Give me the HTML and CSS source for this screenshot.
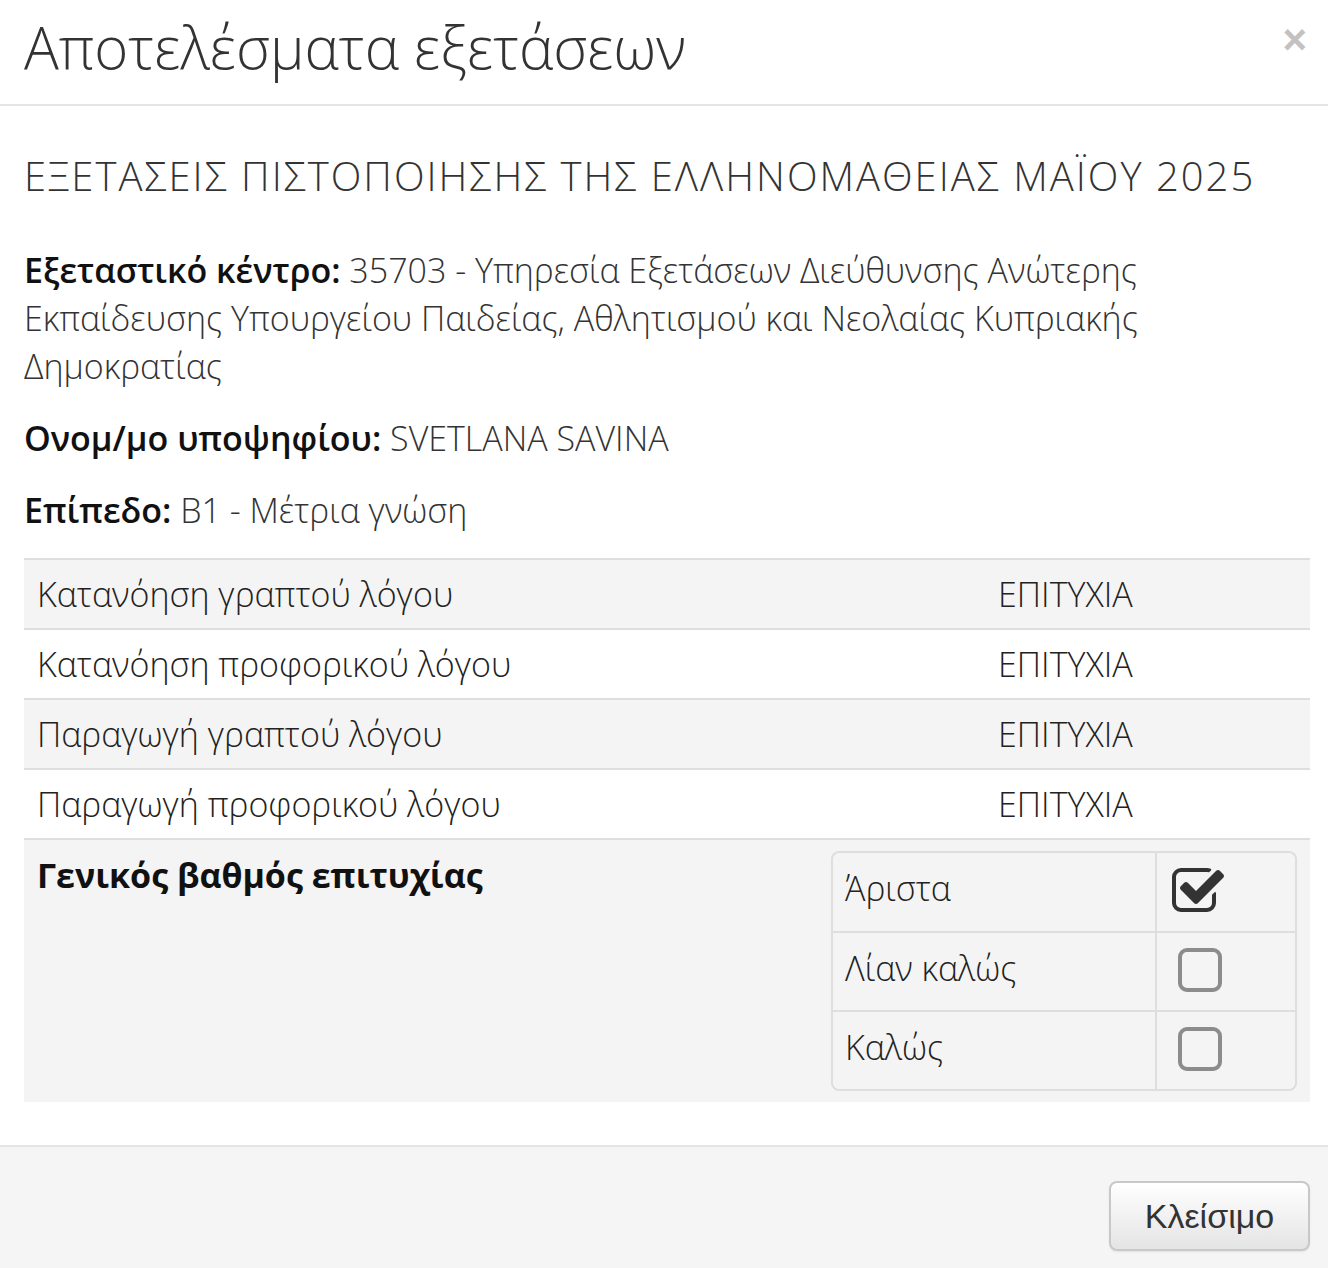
FILE: index.html
```html
<!DOCTYPE html>
<html lang="el">
<head>
<meta charset="utf-8">
<title>Αποτελέσματα εξετάσεων</title>
<link rel="stylesheet" href="styles.css">
</head>
<body>
<div class="modal">
  <header class="modal-header">
    <h1 class="modal-title">Αποτελέσματα εξετάσεων</h1>
    <button class="close" type="button" aria-label="Close">×</button>
  </header>
  <main class="modal-body">
    <h2 class="exam-title">ΕΞΕΤΑΣΕΙΣ ΠΙΣΤΟΠΟΙΗΣΗΣ ΤΗΣ ΕΛΛΗΝΟΜΑΘΕΙΑΣ ΜΑΪΟΥ 2025</h2>
    <p class="info"><strong>Εξεταστικό κέντρο:</strong> 35703 - Υπηρεσία Εξετάσεων Διεύθυνσης Ανώτερης Εκπαίδευσης Υπουργείου Παιδείας, Αθλητισμού και Νεολαίας Κυπριακής Δημοκρατίας</p>
    <p class="info"><strong>Ονομ/μο υποψηφίου:</strong> SVETLANA SAVINA</p>
    <p class="info"><strong>Επίπεδο:</strong> B1 - Μέτρια γνώση</p>
    <div class="results">
      <div class="row striped"><span>Κατανόηση γραπτού λόγου</span><span>ΕΠΙΤΥΧΙΑ</span></div>
      <div class="row"><span>Κατανόηση προφορικού λόγου</span><span>ΕΠΙΤΥΧΙΑ</span></div>
      <div class="row striped"><span>Παραγωγή γραπτού λόγου</span><span>ΕΠΙΤΥΧΙΑ</span></div>
      <div class="row"><span>Παραγωγή προφορικού λόγου</span><span>ΕΠΙΤΥΧΙΑ</span></div>
      <div class="grade-row striped">
        <strong class="grade-label">Γενικός βαθμός επιτυχίας</strong>
        <div class="grades">
          <div class="grade">
            <span class="grade-name">Άριστα</span>
            <span class="grade-box">
              <svg class="icon checked" viewBox="0 0 1792 1792" width="56" height="56"><path fill="currentColor" d="M1472 930v318q0 119-84.5 203.5t-203.5 84.5h-832q-119 0-203.5-84.5t-84.5-203.5v-832q0-119 84.5-203.5t203.5-84.5h832q63 0 117 25 15 7 18 23 3 17-9 29l-49 49q-10 10-23 10-3 0-9-2-23-6-45-6h-832q-66 0-113 47t-47 113v832q0 66 47 113t113 47h832q66 0 113-47t47-113v-254q0-13 9-22l64-64q10-10 23-10 6 0 12 3 20 8 20 29zm231-489l-814 814q-24 24-57 24t-57-24l-430-430q-24-24-24-57t24-57l110-110q24-24 57-24t57 24l263 263 647-647q24-24 57-24t57 24l110 110q24 24 24 57t-24 57z"/></svg>
            </span>
          </div>
          <div class="grade">
            <span class="grade-name">Λίαν καλώς</span>
            <span class="grade-box">
              <svg class="icon unchecked" viewBox="0 0 1408 1792" width="44" height="56"><path fill="currentColor" d="M1120 256h-832q-66 0-113 47t-47 113v832q0 66 47 113t113 47h832q66 0 113-47t47-113v-832q0-66-47-113t-113-47zm288 160v832q0 119-84.5 203.5t-203.5 84.5h-832q-119 0-203.5-84.5t-84.5-203.5v-832q0-119 84.5-203.5t203.5-84.5h832q119 0 203.5 84.5t84.5 203.5z"/></svg>
            </span>
          </div>
          <div class="grade">
            <span class="grade-name">Καλώς</span>
            <span class="grade-box">
              <svg class="icon unchecked" viewBox="0 0 1408 1792" width="44" height="56"><path fill="currentColor" d="M1120 256h-832q-66 0-113 47t-47 113v832q0 66 47 113t113 47h832q66 0 113-47t47-113v-832q0-66-47-113t-113-47zm288 160v832q0 119-84.5 203.5t-203.5 84.5h-832q-119 0-203.5-84.5t-84.5-203.5v-832q0-119 84.5-203.5t203.5-84.5h832q119 0 203.5 84.5t84.5 203.5z"/></svg>
            </span>
          </div>
        </div>
      </div>
    </div>
  </main>
  <footer class="modal-footer">
    <button class="btn" type="button">Κλείσιμο</button>
  </footer>
</div>
</body>
</html>
```

FILE: styles.css
```css
* { box-sizing: border-box; }
html, body { margin: 0; padding: 0; background: #fff; }
body {
  font-family: "Open Sans", "Noto Sans", sans-serif;
  font-weight: 300;
  color: #333;
  width: 1328px;
  height: 1268px;
  overflow: hidden;
}
.modal { display: flex; flex-direction: column; height: 1268px; }

.modal-header {
  height: 106px;
  border-bottom: 2px solid #e5e5e5;
  display: flex;
  justify-content: space-between;
  align-items: flex-start;
  padding: 0 18px 0 24px;
}
.modal-title {
  margin: 0;
  font-size: 58px;
  font-weight: 300;
  line-height: 94px;
  color: #333;
}
.close {
  border: 0;
  background: none;
  padding: 0;
  margin-top: 16px;
  margin-right: 3px;
  font-family: "Liberation Sans", Arial, sans-serif;
  font-weight: 700;
  font-size: 42px;
  line-height: 48px;
  color: #c2c2c2;
}

.modal-body {
  flex: 1;
  padding: 46px 18px 0 24px;
}
.exam-title {
  margin: 0 0 46px;
  font-size: 40px;
  font-weight: 300;
  letter-spacing: 2px;
  line-height: 48px;
  color: #333;
  white-space: nowrap;
}
.info {
  margin: 0 0 24px;
  font-size: 34px;
  line-height: 48px;
}
.info strong { font-weight: 600; color: #111; }

.results { font-size: 34px; line-height: 48px; }
.row {
  display: grid;
  grid-template-columns: 961px 1fr;
  border-top: 2px solid #dedede;
  padding: 10px 13px;
  color: #222;
}
.striped { background: #f4f4f4; }

.grade-row {
  display: flex;
  justify-content: space-between;
  align-items: flex-start;
  border-top: 2px solid #dedede;
  padding: 11px 13px;
}
.grade-label { font-weight: 700; color: #111; }
.grades {
  width: 466px;
  border: 2px solid #dedede;
  border-radius: 8px;
}
.grade {
  display: grid;
  grid-template-columns: 324px 1fr;
  height: 78px;
}
.grade + .grade { border-top: 2px solid #dedede; height: 79px; }
.grade-name {
  padding: 11px 12px 0;
  border-right: 2px solid #dedede;
  color: #222;
}
.grade-box { padding-top: 11px; }
.icon { display: block; }
.checked { color: #333; margin-left: 13px; }
.unchecked { color: #8c8c8c; margin-left: 21px; }

.modal-footer {
  height: 123px;
  border-top: 2px solid #e5e5e5;
  background: #f5f5f5;
  display: flex;
  justify-content: flex-end;
  align-items: flex-start;
  padding: 34px 18px 0 24px;
}
.btn {
  width: 201px;
  height: 70px;
  border: 2px solid #c8c8c8;
  border-radius: 8px;
  background: linear-gradient(#ffffff, #e4e4e4);
  box-shadow: 0 1px 2px rgba(0,0,0,0.08);
  font-family: "Liberation Sans", Arial, sans-serif;
  font-size: 34px;
  color: #333;
  padding: 0;
}
```
